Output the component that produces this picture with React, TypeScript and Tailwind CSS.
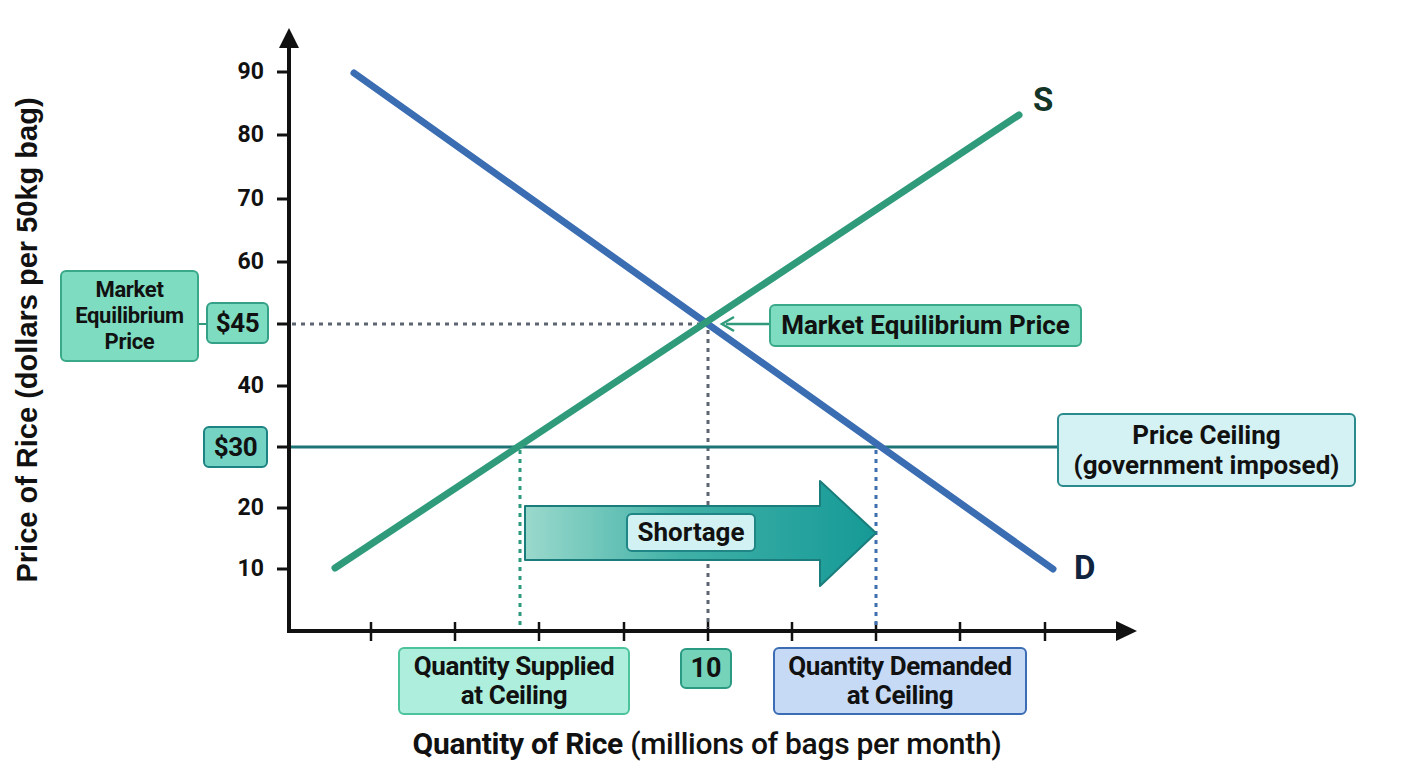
const roboto = "font-['Roboto',sans-serif]";

const yTicks = [
  { v: "90", y: 72 },
  { v: "80", y: 135 },
  { v: "70", y: 199 },
  { v: "60", y: 262 },
  { v: "40", y: 386 },
  { v: "20", y: 508 },
  { v: "10", y: 569 },
];

const xTicks = [371, 455, 539, 624, 708, 792, 876, 960, 1045];

function Chart() {
  return (
    <svg className="absolute inset-0" width={1408} height={768} viewBox="0 0 1408 768">
      <defs>
        <linearGradient id="shortage" x1="0" x2="1" y1="0" y2="0">
          <stop offset="0" stopColor="#9ad9cc" />
          <stop offset="0.45" stopColor="#3fb0a6" />
          <stop offset="1" stopColor="#169a97" />
        </linearGradient>
      </defs>

      {/* y ticks */}
      {yTicks.map((t) => (
        <line key={t.y} x1={277} x2={289} y1={t.y} y2={t.y} stroke="#111" strokeWidth={3} />
      ))}
      <line x1={277} x2={289} y1={324} y2={324} stroke="#111" strokeWidth={3} />
      <line x1={277} x2={289} y1={447} y2={447} stroke="#111" strokeWidth={3} />

      {/* x ticks */}
      {xTicks.map((x) => (
        <line key={x} x1={x} x2={x} y1={622} y2={641} stroke="#111" strokeWidth={2.5} />
      ))}

      {/* guide lines */}
      <line x1={292} x2={708} y1={324} y2={324} stroke="#5c6570" strokeWidth={3} strokeDasharray="4 5" />
      <line x1={708} x2={708} y1={330} y2={628} stroke="#5c6570" strokeWidth={3} strokeDasharray="4 5" />
      <line x1={520} x2={520} y1={450} y2={628} stroke="#2e9a7c" strokeWidth={3} strokeDasharray="4 5" />
      <line x1={876} x2={876} y1={450} y2={628} stroke="#3f6fae" strokeWidth={3} strokeDasharray="4 5" />

      {/* price ceiling */}
      <line x1={289} x2={1057} y1={447} y2={447} stroke="#1e7377" strokeWidth={3} />

      {/* shortage arrow */}
      <path
        d="M525 506 L820 506 L820 481 L876 533 L820 586 L820 560 L525 560 Z"
        fill="url(#shortage)"
        stroke="#1a7d7c"
        strokeWidth={2}
        strokeLinejoin="round"
      />

      {/* demand & supply */}
      <line x1={354} y1={73} x2={1053} y2={569} stroke="#3b6db3" strokeWidth={7} strokeLinecap="round" />
      <line x1={335} y1={568} x2={1019} y2={115} stroke="#2f9b7b" strokeWidth={7} strokeLinecap="round" />

      {/* equilibrium pointer */}
      <line x1={769} x2={726} y1={324} y2={324} stroke="#2f9b7b" strokeWidth={2.5} />
      <path d="M734 317 L722 324 L734 331" fill="none" stroke="#2f9b7b" strokeWidth={2.5} />

      {/* connector */}
      <line x1={199} x2={206} y1={324} y2={324} stroke="#2f9b7b" strokeWidth={2} />

      {/* axes */}
      <line x1={289} x2={289} y1={44} y2={632} stroke="#111" strokeWidth={4} />
      <path d="M279 48 L289 28 L299 48 Z" fill="#111" />
      <line x1={287} x2={1120} y1={631} y2={631} stroke="#111" strokeWidth={4} />
      <path d="M1116 621 L1137 631 L1116 641 Z" fill="#111" />
    </svg>
  );
}

export default function App() {
  return (
    <div className={`relative w-[1408px] h-[768px] overflow-hidden bg-white text-[#111] ${roboto}`}>
      <Chart />

      {/* y tick labels */}
      {yTicks.map((t) => (
        <div
          key={t.v}
          className="absolute left-[214px] w-[50px] text-right text-[23px] font-bold leading-none"
          style={{ top: t.y - 12 }}
        >
          {t.v}
        </div>
      ))}

      {/* y axis title */}
      <div className="absolute left-[28px] top-[340px] -translate-x-1/2 -translate-y-1/2 -rotate-90 whitespace-nowrap font-['Liberation_Sans',Arial,sans-serif] text-[29px] font-bold">
        Price of Rice (dollars per 50kg bag)
      </div>

      {/* left labels */}
      <div className="absolute left-[60px] top-[270px] flex h-[92px] w-[139px] flex-col items-center justify-center rounded-md border-2 border-[#3aa98a] bg-[#7edcc0] text-center text-[22px] font-bold leading-[26px] tracking-[-0.3px]">
        <span>Market</span>
        <span>Equilibrium</span>
        <span>Price</span>
      </div>
      <div className="absolute left-[206px] top-[302px] flex h-[42px] w-[63px] items-center justify-center rounded-md border-2 border-[#35a088] bg-[#7edcc0] text-[26px] font-bold tracking-[-0.5px]">
        $45
      </div>
      <div className="absolute left-[203px] top-[426px] flex h-[42px] w-[65px] items-center justify-center rounded-md border-2 border-[#1d8282] bg-[#74d3c3] text-[26px] font-bold tracking-[-0.5px]">
        $30
      </div>

      {/* equilibrium label */}
      <div className="absolute left-[769px] top-[304px] flex h-[43px] w-[313px] items-center justify-center rounded-md border-2 border-[#3aa98a] bg-[#7edcc0] text-[26px] font-bold">
        Market Equilibrium Price
      </div>

      {/* S / D */}
      <div className="absolute left-[1033px] top-[83px] text-[33px] font-bold leading-none text-[#123528]">S</div>
      <div className="absolute left-[1074px] top-[551px] text-[33px] font-bold leading-none text-[#10233f]">D</div>

      {/* price ceiling label */}
      <div className="absolute left-[1057px] top-[413px] flex h-[74px] w-[299px] flex-col items-center justify-center rounded-md border-2 border-[#2a8a8c] bg-[#d4f1f4] text-[26px] font-bold leading-[30px]">
        <span>Price Ceiling</span>
        <span>(government imposed)</span>
      </div>

      {/* shortage label */}
      <div className="absolute left-[626px] top-[513px] flex h-[39px] w-[130px] items-center justify-center rounded-md border-2 border-[#1f8585] bg-[#d2f1f2] text-[26px] font-bold">
        Shortage
      </div>

      {/* bottom labels */}
      <div className="absolute left-[398px] top-[647px] flex h-[68px] w-[232px] flex-col items-center justify-center rounded-md border-2 border-[#4cc39b] bg-[#adefdc] text-[26px] font-bold leading-[29px] tracking-[-0.4px]">
        <span>Quantity Supplied</span>
        <span>at Ceiling</span>
      </div>
      <div className="absolute left-[680px] top-[648px] flex h-[41px] w-[52px] items-center justify-center rounded-md border-2 border-[#2b9a83] bg-[#74d3b9] text-[27px] font-bold">
        10
      </div>
      <div className="absolute left-[773px] top-[647px] flex h-[68px] w-[254px] flex-col items-center justify-center rounded-md border-2 border-[#3c6db4] bg-[#c6daf5] text-[26px] font-bold leading-[29px] tracking-[-0.4px]">
        <span>Quantity Demanded</span>
        <span>at Ceiling</span>
      </div>

      {/* x axis title */}
      <div className="absolute left-0 top-[729px] w-[1414px] text-center text-[30px] leading-none tracking-[-0.3px]">
        <span className="font-bold">Quantity of Rice</span>{" "}
        <span className="font-medium">(millions of bags per month)</span>
      </div>
    </div>
  );
}
